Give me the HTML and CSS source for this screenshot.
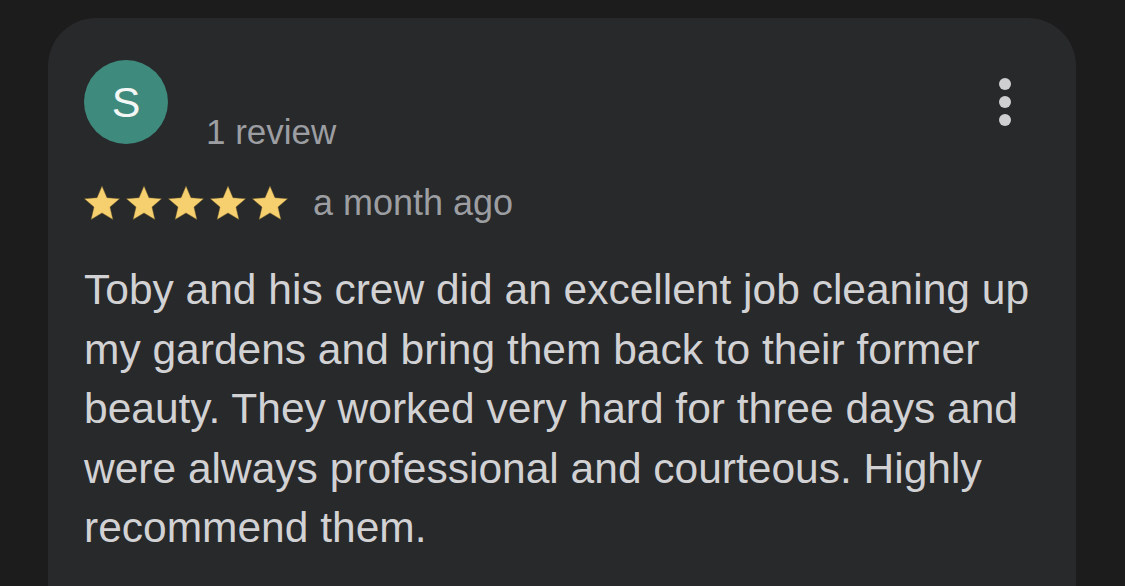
FILE: index.html
```html
<!DOCTYPE html>
<html lang="en">
<head>
<meta charset="utf-8">
<title>Review</title>
<link rel="stylesheet" href="styles.css">
</head>
<body>
<div class="page">
  <article class="card">
    <header class="head">
      <div class="author">
        <div class="avatar">S</div>
        <div class="meta">
          <div class="name"></div>
          <div class="count">1 review</div>
        </div>
      </div>
      <button class="more" aria-label="More options">
        <span class="dot"></span><span class="dot"></span><span class="dot"></span>
      </button>
    </header>
    <div class="rating">
      <div class="stars">
        <svg class="star" viewBox="2 2 20 19.3"><path d="M12 17.27L18.18 21l-1.64-7.03L22 9.24l-7.19-.61L12 2 9.19 8.63 2 9.240l5.46 4.73L5.82 21z"/></svg>
        <svg class="star" viewBox="2 2 20 19.3"><path d="M12 17.27L18.18 21l-1.64-7.03L22 9.24l-7.19-.61L12 2 9.19 8.63 2 9.24l5.46 4.73L5.82 21z"/></svg>
        <svg class="star" viewBox="2 2 20 19.3"><path d="M12 17.27L18.18 21l-1.64-7.03L22 9.24l-7.19-.61L12 2 9.19 8.63 2 9.24l5.46 4.73L5.82 21z"/></svg>
        <svg class="star" viewBox="2 2 20 19.3"><path d="M12 17.27L18.18 21l-1.64-7.03L22 9.24l-7.19-.61L12 2 9.19 8.63 2 9.24l5.46 4.73L5.82 21z"/></svg>
        <svg class="star" viewBox="2 2 20 19.3"><path d="M12 17.27L18.18 21l-1.64-7.03L22 9.24l-7.19-.61L12 2 9.19 8.63 2 9.24l5.46 4.73L5.82 21z"/></svg>
      </div>
      <span class="time">a month ago</span>
    </div>
    <p class="body">Toby and his crew did an excellent job cleaning up my gardens and bring them back to their former beauty. They worked very hard for three days and were always professional and courteous. Highly recommend them.</p>
  </article>
</div>
</body>
</html>
```

FILE: styles.css
```css
html, body {
  margin: 0;
  padding: 0;
  background: #1c1c1d;
  height: 586px;
  overflow: hidden;
}

.page {
  padding: 18px 49px 0 48px;
  font-family: "Liberation Sans", Arial, sans-serif;
}

.card {
  background: #28292b;
  border-radius: 48px 48px 0 0;
  padding: 42px 36px 0 36px;
  height: 568px;
  box-sizing: border-box;
}

.head {
  display: flex;
  justify-content: space-between;
  align-items: flex-start;
}

.author {
  display: flex;
  align-items: flex-start;
}

.avatar {
  width: 84px;
  height: 84px;
  border-radius: 50%;
  background: #3e8a7c;
  color: #f2f6f5;
  font-size: 43px;
  line-height: 84px;
  text-align: center;
}

.meta {
  margin-left: 38px;
}

.name {
  height: 54px;
}

.count {
  font-size: 35px;
  line-height: 36px;
  color: #9c9ea2;
}

.more {
  margin-top: 18px;
  margin-right: 24px;
  width: 22px;
  padding: 0;
  border: 0;
  background: none;
  display: flex;
  flex-direction: column;
  align-items: center;
  gap: 6px;
}

.dot {
  width: 12px;
  height: 12px;
  border-radius: 50%;
  background: #cfcfd1;
}

.rating {
  display: flex;
  align-items: center;
  margin-top: 32px;
}

.stars {
  display: flex;
  gap: 6px;
}

.star {
  width: 36px;
  height: 34px;
  fill: #f6d06f;
  stroke: #6b5a2a;
  stroke-width: 0.25;
}

.time {
  margin-left: 25px;
  font-size: 36px;
  color: #9c9ea2;
}

.body {
  margin: 36px 0 0;
  font-size: 42.5px;
  line-height: 59.5px;
  color: #d2d2d4;
}
```
